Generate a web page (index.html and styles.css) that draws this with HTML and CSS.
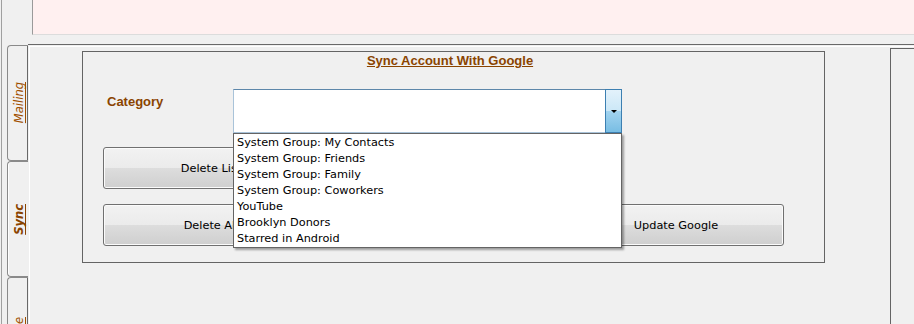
FILE: index.html
```html
<!DOCTYPE html>
<html lang="en">
<head>
    <meta charset="UTF-8">
    <meta name="viewport" content="width=device-width, initial-scale=1.0">
    <title>Sync Account With Google</title>
    <link rel="stylesheet" href="styles.css">
</head>
<body>
    <div class="window">
        <!-- Top panel -->
        <div class="top-panel"></div>

        <!-- Tab control -->
        <div class="tab-area">
            <div class="tab-strip">
                <div class="tab"><span class="tab-label">Mailing</span></div>
                <div class="tab active"><span class="tab-label">Sync</span></div>
                <div class="tab"><span class="tab-label">Profile</span></div>
            </div>

            <div class="tab-page">
                <div class="group sync-group">
                    <div class="group-title">Sync Account With Google</div>

                    <div class="category-row">
                        <label class="field-label">Category</label>
                        <div class="combo">
                            <div class="combo-button"><span class="arrow"></span></div>
                            <ul class="combo-list">
                                <li>System Group: My Contacts</li>
                                <li>System Group: Friends</li>
                                <li>System Group: Family</li>
                                <li>System Group: Coworkers</li>
                                <li>YouTube</li>
                                <li>Brooklyn Donors</li>
                                <li>Starred in Android</li>
                            </ul>
                        </div>
                    </div>

                    <div class="button-row first">
                        <button class="btn">Delete List</button>
                    </div>
                    <div class="button-row second">
                        <button class="btn">Delete All</button>
                        <button class="btn update">Update Google</button>
                    </div>
                </div>

                <div class="group side-group"></div>
            </div>
        </div>
    </div>
</body>
</html>
```

FILE: styles.css
```css
/* General */
body {
    margin: 0;
    background-color: #f0f0f0;
    height: 324px;
    overflow: hidden;
}
.window {
    margin-left: 1px;
    border-left: 1px solid #a0a0a0;
    height: 324px;
    overflow: hidden;
}
/* Top panel */
.top-panel {
    height: 34px;
    margin-left: 30px;
    background-color: #fff0f0;
    border-left: 1px solid #9a9a9a;
    border-bottom: 1px solid #dcdcdc;
}
/* Tab control */
.tab-area {
    display: flex;
    margin-top: 9px;
}
.tab-strip {
    display: flex;
    flex-direction: column;
    flex-shrink: 0;
    width: 21px;
    margin-left: 5px;
    padding-top: 1px;
}
.tab {
    box-sizing: border-box;
    flex-shrink: 0;
    height: 116px;
    border: 1px solid #8a8a8a;
    border-right-color: #696969;
    border-radius: 4px 0 0 4px;
    display: flex;
    align-items: center;
    justify-content: center;
    padding-left: 3px;
}
.tab.active {
    border-right: none;
    box-shadow: inset 1px 0 0 #fff;
}
.tab-label {
    writing-mode: vertical-rl;
    transform: rotate(180deg);
    font-family: "DejaVu Sans", sans-serif;
    font-style: italic;
    font-size: 11.5px;
    line-height: 13px;
    color: #a05000;
    text-decoration: underline;
}
.tab.active .tab-label {
    font-weight: bold;
    color: #8a4400;
}
.tab-page {
    flex: 1;
    min-width: 0;
    height: 300px;
    display: flex;
    align-items: flex-start;
    overflow: hidden;
    border-top: 1px solid #696969;
    box-shadow: inset 1px 1px 0 #f0f0f0, inset 2px 2px 0 #fff;
}
/* Group boxes */
.group {
    box-sizing: border-box;
    flex-shrink: 0;
    border: 1px solid #646464;
}
.sync-group {
    width: 743px;
    height: 212px;
    margin: 6px 0 0 54px;
}
.side-group {
    width: 100px;
    height: 300px;
    margin: 3px 0 0 65px;
}
.group-title {
    margin-top: 1px;
    padding-right: 7px;
    text-align: center;
    font-family: "Liberation Sans", Arial, sans-serif;
    font-weight: bold;
    font-size: 13px;
    line-height: 15px;
    color: #8a4400;
    text-decoration: underline;
}
/* Category row */
.category-row {
    display: flex;
    margin-top: 21px;
    padding-left: 24px;
}
.field-label {
    width: 126px;
    margin-top: 5px;
    font-family: "Liberation Sans", Arial, sans-serif;
    font-weight: bold;
    font-size: 13px;
    line-height: 15px;
    color: #8a4400;
}
.combo {
    position: relative;
    box-sizing: border-box;
    width: 389px;
    height: 44px;
    display: flex;
    justify-content: flex-end;
    background-color: #fff;
    border: 1px solid #a9c3d9;
    border-top-color: #5d87aa;
}
.combo-button {
    box-sizing: border-box;
    width: 17px;
    margin: -1px -1px -1px 0;
    display: flex;
    align-items: center;
    justify-content: center;
    border: 1px solid #3c7fb1;
    background: linear-gradient(#e3f2fb 0%, #cbe7f7 50%, #a3d4f0 50%, #78bde3 100%);
}
.arrow {
    width: 0;
    height: 0;
    margin-top: 1px;
    border-left: 3px solid transparent;
    border-right: 3px solid transparent;
    border-top: 3px solid #000;
}
.combo-list {
    position: absolute;
    top: calc(100% + 1px);
    left: -1px;
    z-index: 2;
    box-sizing: border-box;
    width: 389px;
    margin: 0;
    padding: 1px 0 0;
    list-style: none;
    background-color: #fff;
    border: 1px solid #646464;
    box-shadow: 2px 2px 2px rgba(0, 0, 0, 0.35);
}
.combo-list li {
    padding-left: 3px;
    font-family: "DejaVu Sans", sans-serif;
    font-size: 11.3px;
    line-height: 16px;
    color: #000;
    white-space: nowrap;
}
/* Buttons */
.button-row {
    display: flex;
    padding-left: 20px;
}
.button-row.first {
    margin-top: 14px;
}
.button-row.second {
    margin-top: 15px;
}
.btn {
    box-sizing: border-box;
    width: 216px;
    height: 42px;
    margin: 0;
    padding: 0;
    border: 1px solid #707070;
    border-radius: 3px;
    background: linear-gradient(#f2f2f2 0%, #ebebeb 50%, #dddddd 50%, #cfcfcf 100%);
    box-shadow: inset 0 0 0 1px #fbfbfb;
    font-family: "DejaVu Sans", sans-serif;
    font-size: 11.3px;
    color: #000;
}
.btn.update {
    margin-left: 249px;
}
```
